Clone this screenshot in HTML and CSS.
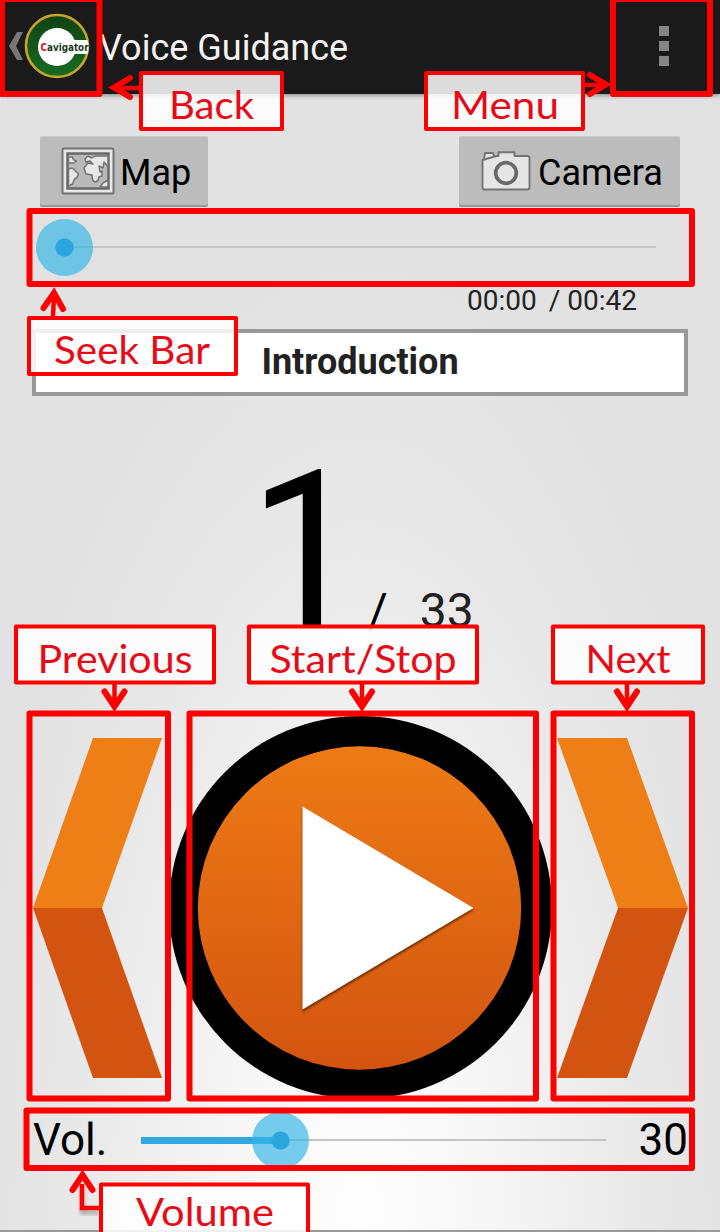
FILE: index.html
```html
<!DOCTYPE html>
<html lang="en">
<head>
<meta charset="utf-8">
<title>Voice Guidance</title>
<link rel="stylesheet" href="styles.css">
</head>
<body>
<main class="screen">
  <header class="bar">
    <svg class="back" width="16" height="36" viewBox="0 0 16 36"><path d="M15 4H9L1 18l8 14h6L8 18z" fill="#777"/></svg>
    <svg class="logo" width="66" height="66" viewBox="0 0 66 66">
      <defs><linearGradient id="green" x1="0" y1="0" x2="0" y2="1"><stop offset="0" stop-color="#0f4214"/><stop offset="1" stop-color="#176c20"/></linearGradient></defs>
      <circle cx="33" cy="33" r="31" fill="url(#green)" stroke="#c9a42c" stroke-width="2.6"/>
      <circle cx="33" cy="34" r="19" fill="#fff"/>
      <path d="M44 27H63.5Q65.500 34 63.500 41H44z" fill="#fff"/>
      <text class="brand" x="16.500" y="38" textLength="48" lengthAdjust="spacingAndGlyphs"><tspan fill="#d5152e">C</tspan>avigator</text>
    </svg>
    <h1 class="heading">Voice Guidance</h1>
    <span class="overflow"><i></i><i></i><i></i></span>
  </header>

  <div class="tools">
    <button class="tool map">
      <svg width="54" height="48" viewBox="0 0 54 48">
        <rect x="1.500" y="1.500" width="51" height="45" rx="1.500" fill="#e8e8e8" stroke="#737373" stroke-width="2"/>
        <rect x="6.500" y="6.500" width="41" height="35" fill="#b9b9b9" stroke="#666" stroke-width="2.400"/>
        <g fill="#e7e7e7" stroke="#747474" stroke-width="1.500" stroke-linejoin="round">
          <path d="M7.500 10h4q0 3 4 4l-3 2-5 0zM7.500 22q4-2 6 1l4 4q-1 4-4 5l-2 5-4 2z"/>
          <path d="M24 12l3-3 4 2 3-2h13v11l-4-5-1 6-4-2 1 6 2-1v5l-3 1q-1 5-4 5-3-1-3-7l-6-1-2-6 4-5 5 1-3-3-4 1z"/>
          <path d="M39 40l3-4 5-3v7z"/>
        </g>
      </svg>
      <span>Map</span>
    </button>
    <button class="tool camera">
      <svg width="50" height="40" viewBox="0 0 50 40">
        <path d="M3 8l1-6h8l1 3M1.500 9l14-4h2V1.200h16V5H46q2.500 0 2.500 2v29.500q0 2-2 2H3.500q-2 0-2-2z" fill="#e5e5e5" stroke="#747474" stroke-width="1.900" stroke-linejoin="round"/>
        <circle cx="25" cy="22" r="10.300" fill="#e5e5e5" stroke="#696969" stroke-width="3.700"/>
      </svg>
      <span>Camera</span>
    </button>
  </div>

  <div class="seek"><div class="track"><span class="thumb"></span></div></div>
  <div class="time"><span>00:00</span><span>/</span><span>00:42</span></div>
  <h2 class="track-title">Introduction</h2>
  <div class="counter"><span class="current">1</span><span class="slash">/</span><span class="total">33</span></div>

  <div class="player">
    <svg width="129" height="340" viewBox="0 0 129 340"><path d="M60 0h69L69 170H0z" fill="#ee7f16"/><path d="M0 170h69l60 170H60z" fill="#d35410"/></svg>
    <svg class="play" width="384" height="384" viewBox="0 0 384 384">
      <defs>
        <linearGradient id="disc" x1="0" y1="0" x2="0" y2="1"><stop offset="0" stop-color="#ee7b15"/><stop offset="1" stop-color="#d35410"/></linearGradient>
        <filter id="soft"><feGaussianBlur stdDeviation="1.200"/></filter>
      </defs>
      <circle cx="192.500" cy="191.500" r="191.500"/>
      <circle cx="191.500" cy="192" r="161.700" fill="url(#disc)"/>
      <path d="M134.500 92.500l171 101.700-171 101.700z" fill="#5c2804" opacity=".8" filter="url(#soft)"/>
      <path d="M134.500 90.500L305.500 192l-171 101.500z" fill="#fff"/>
    </svg>
    <svg width="131" height="340" viewBox="0 0 131 340"><path d="M0 0h70l61 170H61z" fill="#ee7f16"/><path d="M61 170h70L70 340H0z" fill="#d35410"/></svg>
  </div>

  <div class="volume"><span class="vol-label">Vol.</span><div class="track"><span class="fill"></span><span class="thumb"></span></div><span class="vol-value">30</span></div>
</main>

<svg class="notes" width="720" height="1232" viewBox="0 0 720 1232">
  <defs><filter id="shade" x="-20%" y="-20%" width="150%" height="150%"><feDropShadow dx="0" dy="4" stdDeviation="2" flood-opacity=".3"/></filter></defs>
  <g class="frame">
    <rect x="2" y="-1" width="97.500" height="95"/>
    <rect x="613" y="-1" width="97" height="95"/>
    <rect x="29.500" y="211" width="662.500" height="73"/>
    <rect x="29.500" y="713.500" width="138.500" height="385"/>
    <rect x="189.500" y="713.500" width="346.500" height="385"/>
    <rect x="553.500" y="713.500" width="138.500" height="385"/>
    <rect x="26.500" y="1110.500" width="665.500" height="57.500"/>
  </g>
  <g class="arrow">
    <path d="M139 88h-22"/><path class="head" d="M130 78l-16 9.500 16 9.500"/>
    <path d="M585 85h20"/><path class="head" d="M590 75l16 9.500-16 9.500"/>
    <path d="M53 316l1-20"/><path class="head" d="M43.500 308L54 293l9 16"/>
    <path d="M114.500 684v20"/><path class="head" d="M104.500 691.500l10 15 10-15"/>
    <path d="M362 684v20"/><path class="head" d="M352 691.500l10 15 10-15"/>
    <path d="M627 684v20"/><path class="head" d="M617 691.500l10 15 10-15"/>
    <path d="M99 1208H82v-24" filter="url(#shade)"/><path class="head" d="M72.500 1190l10-15 10 15"/>
  </g>
  <g class="label">
    <rect x="141" y="73" width="141" height="56"/>
    <rect x="426" y="73" width="157" height="56"/>
    <rect x="29" y="318" width="207" height="56"/>
    <rect x="16" y="626.500" width="198" height="56"/>
    <rect x="249" y="626.500" width="228" height="56"/>
    <rect x="553" y="626.500" width="150" height="56"/>
    <rect x="101" y="1184.500" width="207" height="56"/>
  </g>
  <g class="caption">
    <text x="169" y="119" textLength="85" lengthAdjust="spacingAndGlyphs">Back</text>
    <text x="451" y="119" textLength="108" lengthAdjust="spacingAndGlyphs">Menu</text>
    <text x="54" y="364" textLength="156" lengthAdjust="spacingAndGlyphs">Seek Bar</text>
    <text x="37.500" y="673" textLength="155" lengthAdjust="spacingAndGlyphs">Previous</text>
    <text x="269.500" y="673" textLength="187" lengthAdjust="spacingAndGlyphs">Start/Stop</text>
    <text x="585.500" y="673" textLength="85" lengthAdjust="spacingAndGlyphs">Next</text>
    <text x="136" y="1226" textLength="138" lengthAdjust="spacingAndGlyphs">Volume</text>
  </g>
</svg>
</body>
</html>
```
FILE: styles.css
```css
* { box-sizing: border-box; }
body { margin: 0; width: 720px; height: 1232px; position: relative; overflow: hidden; font-family: Roboto, sans-serif; color: #000; }
.screen {
  height: 1232px; display: flex; flex-direction: column;
  border-bottom: 2px solid #999;
  background: radial-gradient(ellipse 390px 980px at 50% 100%, #fefefe 0%, #f6f6f6 35%, #e9e9e9 70%, #e2e2e2 100%);
}
.bar { height: 94px; flex: none; display: flex; align-items: center; background: #1a1a1a; padding: 0 51px 2px 8px; box-shadow: 0 1px 5px rgba(0,0,0,.45); }
.logo { flex: none; overflow: visible; }
.brand { font: bold 10px "DejaVu Sans", sans-serif; fill: #173b1c; }
.heading { margin: 3px 0 0 9px; font-size: 36px; line-height: 42px; font-weight: 400; color: #f2f2f2; white-space: nowrap; }
.overflow { margin-left: auto; display: grid; gap: 5px; }
.overflow i { width: 10px; height: 10px; background: #858585; }

.tools { height: 114px; flex: none; display: flex; justify-content: space-between; align-items: flex-start; padding: 42px 40px 0; }
.tool { height: 71px; display: flex; align-items: center; border: 0; border-radius: 2px; background: #bcbcbc; box-shadow: inset 0 -2px #999, inset 0 1px #c8c8c8; color: #000; font: 36px Roboto, sans-serif; }
.map { width: 168px; padding: 0 0 1px 21px; gap: 5px; }
.camera { width: 221px; padding: 0 0 2px 22px; gap: 7px; }
.tool span { padding-top: 4px; }

.seek { height: 78px; flex: none; padding: 0 64px; display: flex; align-items: center; }
.track { position: relative; flex: 1; height: 2px; background: #c4c4c4; }
.thumb { position: absolute; left: 0; top: 50%; width: 57px; height: 57px; margin: -28.5px; border-radius: 50%; background: radial-gradient(circle, #2ba5dd 0 8.5px, rgba(51,181,229,.67) 9.5px); }
.time { height: 43px; flex: none; display: flex; justify-content: flex-end; padding: 0 83px 0 0; font-size: 28px; line-height: 30px; color: #222; }
.time span:nth-child(2) { margin: 0 7px 0 12px; }
.track-title { height: 67px; flex: none; margin: 0 32px; border: 4px solid #999; background: #fff; color: #222; font-size: 36px; line-height: 58px; font-weight: 700; text-align: center; }
.counter { height: 320px; flex: none; display: flex; align-items: baseline; padding-left: 249px; line-height: 312px; }
.current { font-size: 220px; width: 119px; transform: scaleX(.92); transform-origin: 0 50%; }
.slash { font-size: 48px; }
.total { font-size: 48px; margin-left: 32px; color: #222; }
.player { height: 384px; flex: none; display: flex; align-items: center; justify-content: space-between; padding: 0 32px 0 33px; }
.player svg { flex: none; }
.player .play { margin: 0 -28px; }
.volume { height: 80px; flex: none; display: flex; align-items: center; padding: 0 32px 0 33px; font-size: 44px; }
.vol-label { width: 108px; }
.fill { position: absolute; left: 0; top: -2px; width: 139px; height: 7px; background: #33a7df; }
.volume .thumb { left: 139px; }
.vol-value { width: 82px; text-align: right; }

.notes { position: absolute; left: 0; top: 0; }
.frame { fill: none; stroke: #f00; stroke-width: 6; stroke-linejoin: round; }
.arrow { fill: none; stroke: #f00; stroke-width: 4.5; }
.arrow .head { stroke-width: 6; stroke-linecap: round; stroke-linejoin: miter; }
.label { fill: rgba(255,255,255,.85); stroke: #f00; stroke-width: 4; stroke-linejoin: round; }
.caption { font: 38px Lato, sans-serif; fill: #e80b17; }
```
